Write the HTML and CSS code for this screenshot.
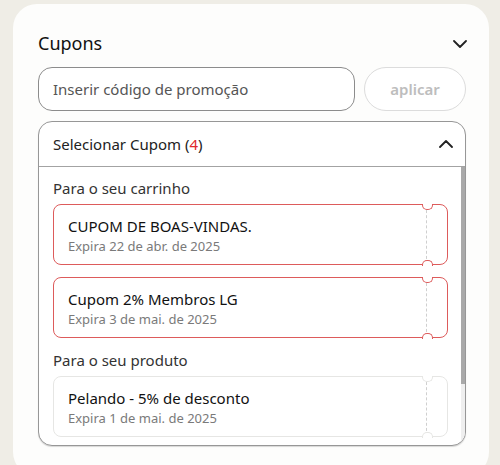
FILE: index.html
```html
<!DOCTYPE html>
<html lang="pt-BR">
<head>
	<meta charset="utf-8">
	<title>Cupons</title>
	<meta name="viewport" content="width=device-width,initial-scale=1">
	<link rel="stylesheet" href="styles.css">
</head>
<body>
	<div class="card">
		<div class="card-head">
			<h2>Cupons</h2>
			<svg class="chev" width="14" height="8" viewBox="0 0 14 8"><path d="M1 1l6 6 6-6" fill="none" stroke="#222" stroke-width="1.8" stroke-linecap="round" stroke-linejoin="round"/></svg>
		</div>

		<div class="promo">
			<input type="text" class="promo-input" placeholder="Inserir código de promoção">
			<button class="promo-btn" disabled>aplicar</button>
		</div>

		<div class="select">
			<div class="select-head">
				<span>Selecionar Cupom (<em>4</em>)</span>
				<svg class="chev" width="14" height="8" viewBox="0 0 14 8"><path d="M1 7l6-6 6 6" fill="none" stroke="#222" stroke-width="1.8" stroke-linecap="round" stroke-linejoin="round"/></svg>
			</div>
			<div class="select-body">
				<div class="select-list">
					<p class="group">Para o seu carrinho</p>
					<div class="coupon on">
						<div class="coupon-body">
							<div class="coupon-name">CUPOM DE BOAS-VINDAS.</div>
							<div class="coupon-date">Expira 22 de abr. de 2025</div>
						</div>
						<div class="coupon-stub"></div>
					</div>
					<div class="coupon on">
						<div class="coupon-body">
							<div class="coupon-name">Cupom 2% Membros LG</div>
							<div class="coupon-date">Expira 3 de mai. de 2025</div>
						</div>
						<div class="coupon-stub"></div>
					</div>

					<p class="group">Para o seu produto</p>
					<div class="coupon">
						<div class="coupon-body">
							<div class="coupon-name">Pelando - 5% de desconto</div>
							<div class="coupon-date">Expira 1 de mai. de 2025</div>
						</div>
						<div class="coupon-stub"></div>
					</div>
				</div>
				<!-- scroll indicator for the list -->
				<div class="scroll-track"><div class="scroll-thumb"></div></div>
			</div>
		</div>
	</div>
</body>
</html>
```

FILE: styles.css
```css
*{margin: 0;padding: 0;box-sizing: border-box;}
html,body{width: 100%;height: 100%;overflow: hidden;}
body{background-color: #efede6;font-family: "Noto Sans","Open Sans",sans-serif;color: #111;}

.card{margin: 4px 11px 0 13px;padding: 28px 23px 30px 25px;background-color: #fdfdfc;border-radius: 24px;}
.card-head{display: flex;align-items: center;justify-content: space-between;height: 23px;}
.card-head h2{font-size: 18px;font-weight: 400;line-height: 23px;color: #111;}
.card-head .chev{margin-right: -1px;}

.promo{display: flex;gap: 9px;margin-top: 12px;}
.promo-input{flex: 1;height: 44px;padding: 0 14px;border: 1px solid #8c8c8c;border-radius: 14px;font: inherit;font-size: 15px;color: #222;background: #fff;outline: none;}
.promo-input::placeholder{color: #555;}
.promo-btn{width: 102px;height: 44px;border: 1px solid #dcdcdc;border-radius: 22px;background: #fff;font: inherit;font-size: 15px;font-weight: 600;color: #bdbdbd;}

.select{margin-top: 10px;border: 1px solid #979797;border-radius: 14px;box-shadow: 0 1px 1px rgba(0,0,0,.15);overflow: hidden;background: #fff;}
.select-head{display: flex;align-items: center;justify-content: space-between;height: 45px;padding: 0 12px 0 14px;border-bottom: 1px solid #a3a3a3;font-size: 15px;color: #222;}
.select-head em{font-style: normal;color: #e0282d;}

.select-body{display: flex;height: 278px;}
.select-list{flex: 1;overflow: hidden;padding: 11px 13px 0 14px;}
.scroll-track{width: 4px;background: #efefef;}
.scroll-thumb{height: 217px;background: #a9a9a9;}

.group{font-size: 15px;line-height: 20px;color: #333;margin-bottom: 6px;}
.coupon + .group{margin-top: 12px;}
.coupon + .coupon{margin-top: 12px;}

/* ticket: body + stub, notches cut over the border on both edges */
.coupon{display: flex;border: 1.5px solid #e6e6e4;border-radius: 8px;}
.coupon.on{border-color: #dd5b5b;}
.coupon-body{flex: 1;padding: 11px 14px 9px;}
.coupon-name{font-size: 15px;line-height: 20px;color: #111;}
.coupon-date{font-size: 13px;line-height: 18px;color: #7a7a7a;margin-top: 1px;}
.coupon-stub{position: relative;width: 21px;border-left: 1px dashed #cfcfcf;}
.coupon-stub::before,.coupon-stub::after{content: "";position: absolute;left: -5px;width: 9px;height: 5px;background: #fff;border: 1.5px solid #e6e6e4;}
.coupon-stub::before{top: -1.5px;border-top: none;border-radius: 0 0 5px 5px;}
.coupon-stub::after{bottom: -1.5px;border-bottom: none;border-radius: 5px 5px 0 0;}
.coupon.on .coupon-stub::before,.coupon.on .coupon-stub::after{border-color: #dd5b5b;}
```
